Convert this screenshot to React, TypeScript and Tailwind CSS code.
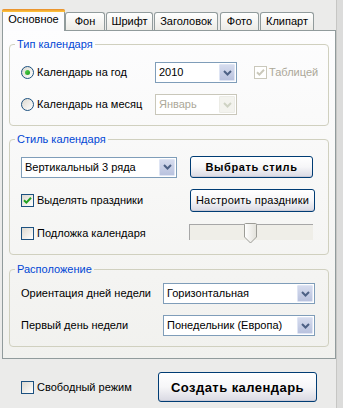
import React from "react";
import clsx from "clsx";

const font = { fontFamily: '"Liberation Sans", Arial, sans-serif' };

function Chevron({ disabled }: { disabled?: boolean }) {
  return (
    <svg width="9" height="6" viewBox="0 0 9 6">
      <path d="M1 1 L4.5 4.5 L8 1" fill="none" stroke={disabled ? "#cfd3c4" : "#4d6185"} strokeWidth="2" />
    </svg>
  );
}

function Select({ className, value, disabled }: { className: string; value: string; disabled?: boolean }) {
  return (
    <div
      className={clsx(
        "flex items-stretch box-border border bg-white",
        disabled ? "border-[#c9c7ba] text-[#aca899]" : "border-[#7f9db9] text-black",
        className
      )}
    >
      <div className="flex-1 flex items-center pl-[3px] overflow-hidden whitespace-nowrap">{value}</div>
      <div
        className={clsx(
          "m-[1px] w-[16px] flex items-center justify-center rounded-[1px] border",
          disabled
            ? "bg-[#f3f3ee] border-[#ecece6]"
            : "bg-gradient-to-b from-[#d6dcee] to-[#b9c2de] border-[#dfe5f4]"
        )}
      >
        <Chevron disabled={disabled} />
      </div>
    </div>
  );
}

function Radio({ checked }: { checked?: boolean }) {
  return (
    <span className="w-[13px] h-[13px] shrink-0 rounded-full border border-[#1c5180] bg-gradient-to-br from-[#dcd9d0] to-white flex items-center justify-center">
      {checked && <span className="w-[5px] h-[5px] rounded-full bg-gradient-to-br from-[#55d451] to-[#1a9a1a]" />}
    </span>
  );
}

function Check({ checked, disabled }: { checked?: boolean; disabled?: boolean }) {
  return (
    <span
      className={clsx(
        "w-[13px] h-[13px] shrink-0 border flex items-center justify-center",
        disabled ? "border-[#cac8bb] bg-white" : "border-[#1c5180] bg-gradient-to-br from-[#dcd9d0] to-white"
      )}
    >
      {checked && (
        <svg width="9" height="9" viewBox="0 0 9 9">
          <path d="M1 4.2 L3.4 6.6 L8 1.8" fill="none" stroke={disabled ? "#cac8bb" : "#21a121"} strokeWidth="2" />
        </svg>
      )}
    </span>
  );
}

function Button({ className, children, bold }: { className: string; children: React.ReactNode; bold?: boolean }) {
  return (
    <div
      className={clsx(
        "box-border border border-[#003c74] rounded-[3px] bg-gradient-to-b from-white via-[#f6f6f8] to-[#d9d9e3] flex items-center justify-center text-black whitespace-nowrap shadow-[inset_0_-1px_0_#c9c9d6]",
        bold && "font-bold",
        className
      )}
    >
      {children}
    </div>
  );
}

function Group({ title, className, children }: { title: string; className: string; children: React.ReactNode }) {
  return (
    <fieldset className="border border-[#d0d0bf] rounded-[4px] m-0 p-0 min-w-0">
      <legend className="ml-[5px] px-[2px] text-[#0046d5] leading-[13px]">{title}</legend>
      <div className={className}>{children}</div>
    </fieldset>
  );
}

export default function App() {
  return (
    <div className="w-[343px] h-[408px] flex bg-[#ebebea] text-[11px] leading-[13px] text-black overflow-hidden" style={font}>
      <div className="w-[336px] flex flex-col">
        {/* tabs */}
        <div className="pt-[9px] pl-[2px] h-[30px] box-border flex items-end relative z-10">
          <div className="w-[63px] h-[22px] -mb-[1px] box-border border-x border-[#919b9c] rounded-t-[3px] bg-[#fcfcfe] flex flex-col">
            <div className="h-[3px] rounded-t-[2px] bg-gradient-to-b from-[#e68b2c] to-[#ffc83c] -mx-[1px]" />
            <div className="pt-[1px] text-center">Основное</div>
          </div>
          <div className="w-[40px] h-[18px] box-border border border-b-0 border-[#919b9c] rounded-t-[3px] bg-gradient-to-b from-white to-[#ecebe6] pt-[2px] text-center">Фон</div>
          <div className="ml-[1px] w-[47px] h-[18px] box-border border border-b-0 border-[#919b9c] rounded-t-[3px] bg-gradient-to-b from-white to-[#ecebe6] pt-[2px] text-center">Шрифт</div>
          <div className="ml-[1px] w-[64px] h-[18px] box-border border border-b-0 border-[#919b9c] rounded-t-[3px] bg-gradient-to-b from-white to-[#ecebe6] pt-[2px] text-center">Заголовок</div>
          <div className="ml-[2px] w-[39px] h-[18px] box-border border border-b-0 border-[#919b9c] rounded-t-[3px] bg-gradient-to-b from-white to-[#ecebe6] pt-[2px] text-center">Фото</div>
          <div className="ml-[1px] w-[54px] h-[18px] box-border border border-b-0 border-[#919b9c] rounded-t-[3px] bg-gradient-to-b from-white to-[#ecebe6] pt-[2px] text-center">Клипарт</div>
        </div>

        {/* panel */}
        <div className="ml-[2px] w-[334px] h-[329px] box-border border border-[#919b9c] bg-gradient-to-b from-[#fdfdfe] to-[#f1f1ee] px-[6px] pt-[7px] flex flex-col">
          <Group title="Тип календаря" className="pt-[11px] pb-[10px] pl-[11px] flex flex-col gap-[11px]">
            <div className="h-[21px] flex items-center">
              <div className="w-[134px] flex items-center">
                <Radio checked />
                <span className="ml-[3px]">Календарь на год</span>
              </div>
              <Select className="w-[82px] h-[21px]" value="2010" />
              <div className="ml-[17px] flex items-center">
                <Check checked disabled />
                <span className="ml-[2px] text-[#aca899]">Таблицей</span>
              </div>
            </div>
            <div className="h-[21px] flex items-center">
              <div className="w-[134px] flex items-center">
                <Radio />
                <span className="ml-[3px]">Календарь на месяц</span>
              </div>
              <Select className="w-[82px] h-[21px]" value="Январь" disabled />
            </div>
          </Group>

          <div className="h-[7px]" />

          <Group title="Стиль календаря" className="pt-[10px] pb-[11px] pl-[11px] flex flex-col gap-[11px]">
            <div className="h-[22px] flex items-center">
              <Select className="w-[156px] h-[21px]" value="Вертикальный 3 ряда" />
              <Button className="ml-[13px] w-[123px] h-[22px] tracking-[0.6px]" bold>
                Выбрать стиль
              </Button>
            </div>
            <div className="h-[23px] flex items-center">
              <div className="w-[169px] flex items-center">
                <Check checked />
                <span className="ml-[3px]">Выделять праздники</span>
              </div>
              <Button className="w-[125px] h-[23px] tracking-[0.2px]">Настроить праздники</Button>
            </div>
            <div className="h-[20px] flex items-center">
              <div className="w-[168px] flex items-center">
                <Check />
                <span className="ml-[3px]">Подложка календаря</span>
              </div>
              <div className="relative w-[124px] h-[20px] pt-[1px] box-border">
                <div className="h-[16px] box-border border-t border-l border-[#a7a7a7] bg-[#efeee8]" />
                <svg className="absolute left-[55px] top-0" width="13" height="21" viewBox="0 0 13 21">
                  <defs>
                    <linearGradient id="th" x1="0" y1="0" x2="1" y2="0">
                      <stop offset="0" stopColor="#ffffff" />
                      <stop offset="1" stopColor="#e2e1da" />
                    </linearGradient>
                  </defs>
                  <path d="M0.5 1.5 Q0.5 0.5 1.5 0.5 H11.5 Q12.5 0.5 12.5 1.5 V14 L6.5 20 L0.5 14 Z" fill="url(#th)" stroke="#9c9c96" />
                </svg>
              </div>
            </div>
          </Group>

          <div className="h-[8px]" />

          <Group title="Расположение" className="pt-[7px] pb-[10px] pl-[11px] flex flex-col gap-[11px]">
            <div className="h-[21px] flex items-center">
              <div className="w-[142px]">Ориентация дней недели</div>
              <Select className="w-[152px] h-[21px]" value="Горизонтальная" />
            </div>
            <div className="h-[21px] flex items-center">
              <div className="w-[142px]">Первый день недели</div>
              <Select className="w-[152px] h-[21px]" value="Понедельник (Европа)" />
            </div>
          </Group>
        </div>

        {/* bottom */}
        <div className="pt-[13px] pl-[21px] flex items-center h-[30px] box-content">
          <div className="w-[137px] flex items-center">
            <Check />
            <span className="ml-[3px]">Свободный режим</span>
          </div>
          <Button className="w-[159px] h-[30px] text-[13px] tracking-[0.45px]" bold>
            Создать календарь
          </Button>
        </div>
      </div>
      <div className="flex-1 bg-[#dcdcdb] border-l border-[#c6c6c4]" />
    </div>
  );
}
